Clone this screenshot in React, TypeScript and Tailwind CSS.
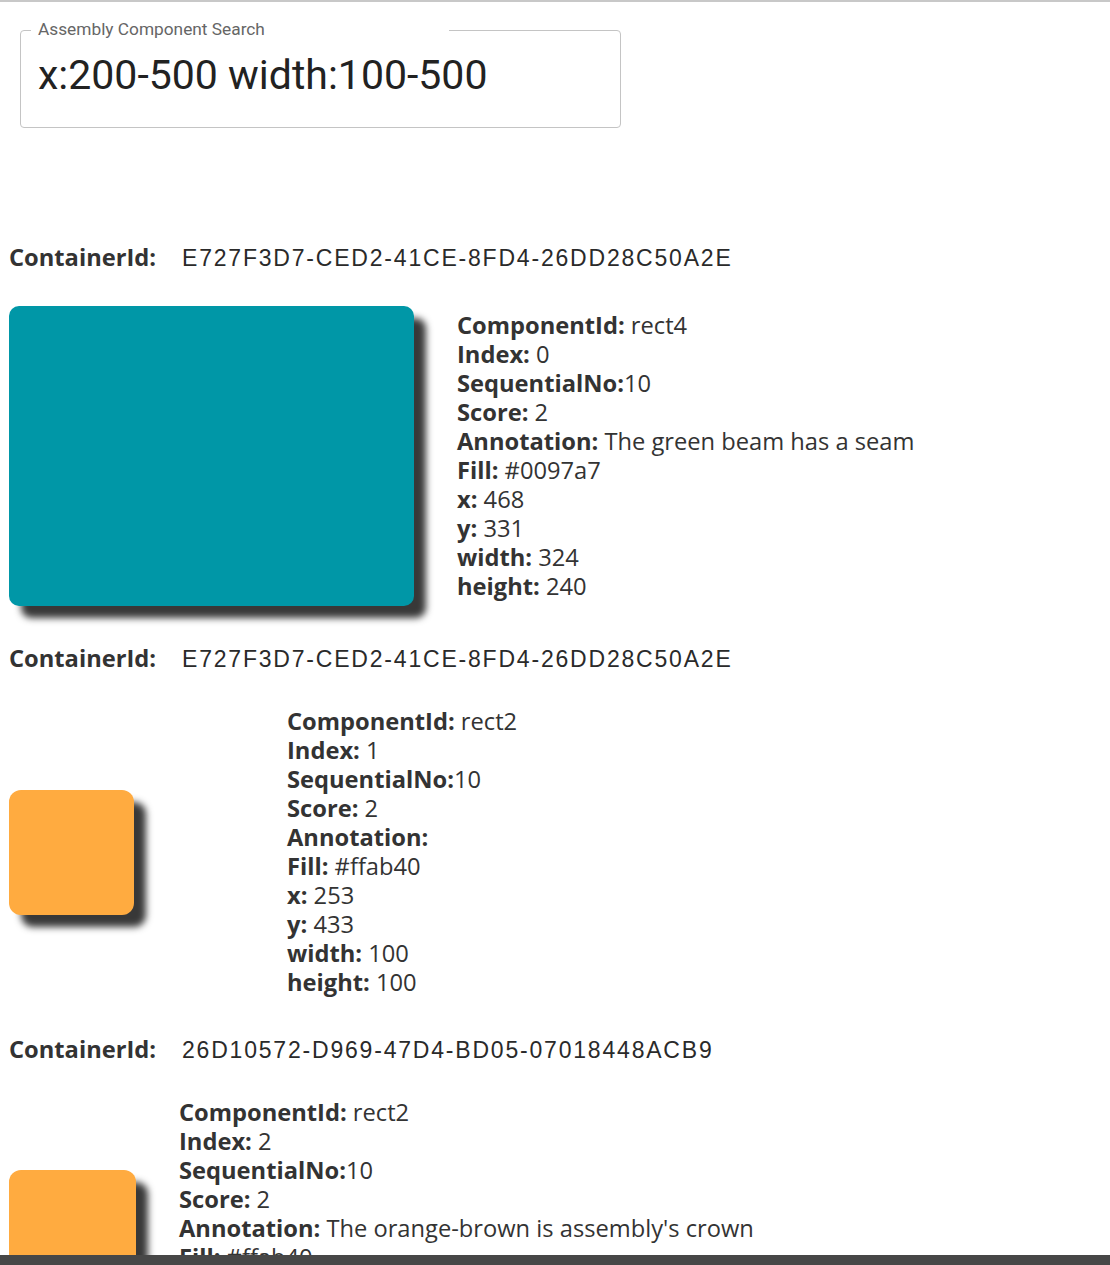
import React from "react";

type Comp = {
  containerId: string;
  componentId: string;
  index: number;
  annotation: string;
  fill: string;
  x: number;
  y: number;
  width: number;
  height: number;
  box: { w: string; h: string; round: string; gap: string };
};

const ITEMS: Comp[] = [
  {
    containerId: "E727F3D7-CED2-41CE-8FD4-26DD28C50A2E",
    componentId: "rect4",
    index: 0,
    annotation: "The green beam has a seam",
    fill: "#0097a7",
    x: 468,
    y: 331,
    width: 324,
    height: 240,
    box: { w: "w-[405px]", h: "h-[300px]", round: "rounded-[10px]", gap: "ml-[43px]" },
  },
  {
    containerId: "E727F3D7-CED2-41CE-8FD4-26DD28C50A2E",
    componentId: "rect2",
    index: 1,
    annotation: "",
    fill: "#ffab40",
    x: 253,
    y: 433,
    width: 100,
    height: 100,
    box: { w: "w-[125px]", h: "h-[125px]", round: "rounded-[12px]", gap: "ml-[153px]" },
  },
  {
    containerId: "26D10572-D969-47D4-BD05-07018448ACB9",
    componentId: "rect2",
    index: 2,
    annotation: "The orange-brown is assembly's crown",
    fill: "#ffab40",
    x: 250,
    y: 120,
    width: 102,
    height: 117,
    box: { w: "w-[127px]", h: "h-[146px]", round: "rounded-[12px]", gap: "ml-[43px]" },
  },
];

function Field({ label, value, tight }: { label: string; value: React.ReactNode; tight?: boolean }) {
  return (
    <div className="leading-[29px] whitespace-nowrap">
      <span className="font-bold">{label}</span>
      {tight ? "" : " "}
      {value}
    </div>
  );
}

function ComponentRow({ c }: { c: Comp }) {
  return (
    <section>
      <div className="flex items-center h-[30px] mb-[33px]">
        <span className="font-bold w-[173px] shrink-0">ContainerId:</span>
        <span className="font-['Liberation_Sans',Arial,sans-serif] text-[23px] tracking-[1.8px] text-[#2a2a2a]">
          {c.containerId}
        </span>
      </div>
      <div className="flex items-center mb-[38px]">
        <div
          className={`${c.box.w} ${c.box.h} ${c.box.round} shrink-0 shadow-[12px_12px_7px_rgba(0,0,0,0.78)]`}
          style={{ backgroundColor: c.fill }}
        />
        <div className={c.box.gap}>
          <Field label="ComponentId:" value={c.componentId} />
          <Field label="Index:" value={c.index} />
          <Field label="SequentialNo:" value="10" tight />
          <Field label="Score:" value="2" />
          <Field label="Annotation:" value={c.annotation} />
          <Field label="Fill:" value={c.fill} />
          <Field label="x:" value={c.x} />
          <Field label="y:" value={c.y} />
          <Field label="width:" value={c.width} />
          <Field label="height:" value={c.height} />
        </div>
      </div>
    </section>
  );
}

export default function App() {
  return (
    <div className="h-[1265px] w-[1110px] flex flex-col overflow-hidden bg-white">
      <div className="flex-1 min-h-0 overflow-hidden border-t-2 border-[#c8c8c8]">
        <div className="pl-[20px] pt-[28px]">
          <div className="relative w-[601px] h-[98px] rounded-[4px] border border-[#c4c4c4]">
            <span className="absolute -top-[12px] left-[10px] px-[7px] bg-white w-[418px] font-['Roboto',sans-serif] text-[17.3px] leading-[20px] text-[#666]">
              Assembly Component Search
            </span>
            <div className="pl-[17px] pt-[20px] font-['Roboto',sans-serif] text-[41px] leading-[48px] text-[#222]">
              x:200-500 width:100-500
            </div>
          </div>
        </div>
        <div className="pl-[9px] mt-[115px] font-['Open_Sans',sans-serif] text-[23.7px] text-[#333]">
          {ITEMS.map((c, i) => (
            <ComponentRow key={i} c={c} />
          ))}
        </div>
      </div>
      <div className="h-[10px] shrink-0 bg-[#474747]" />
    </div>
  );
}
